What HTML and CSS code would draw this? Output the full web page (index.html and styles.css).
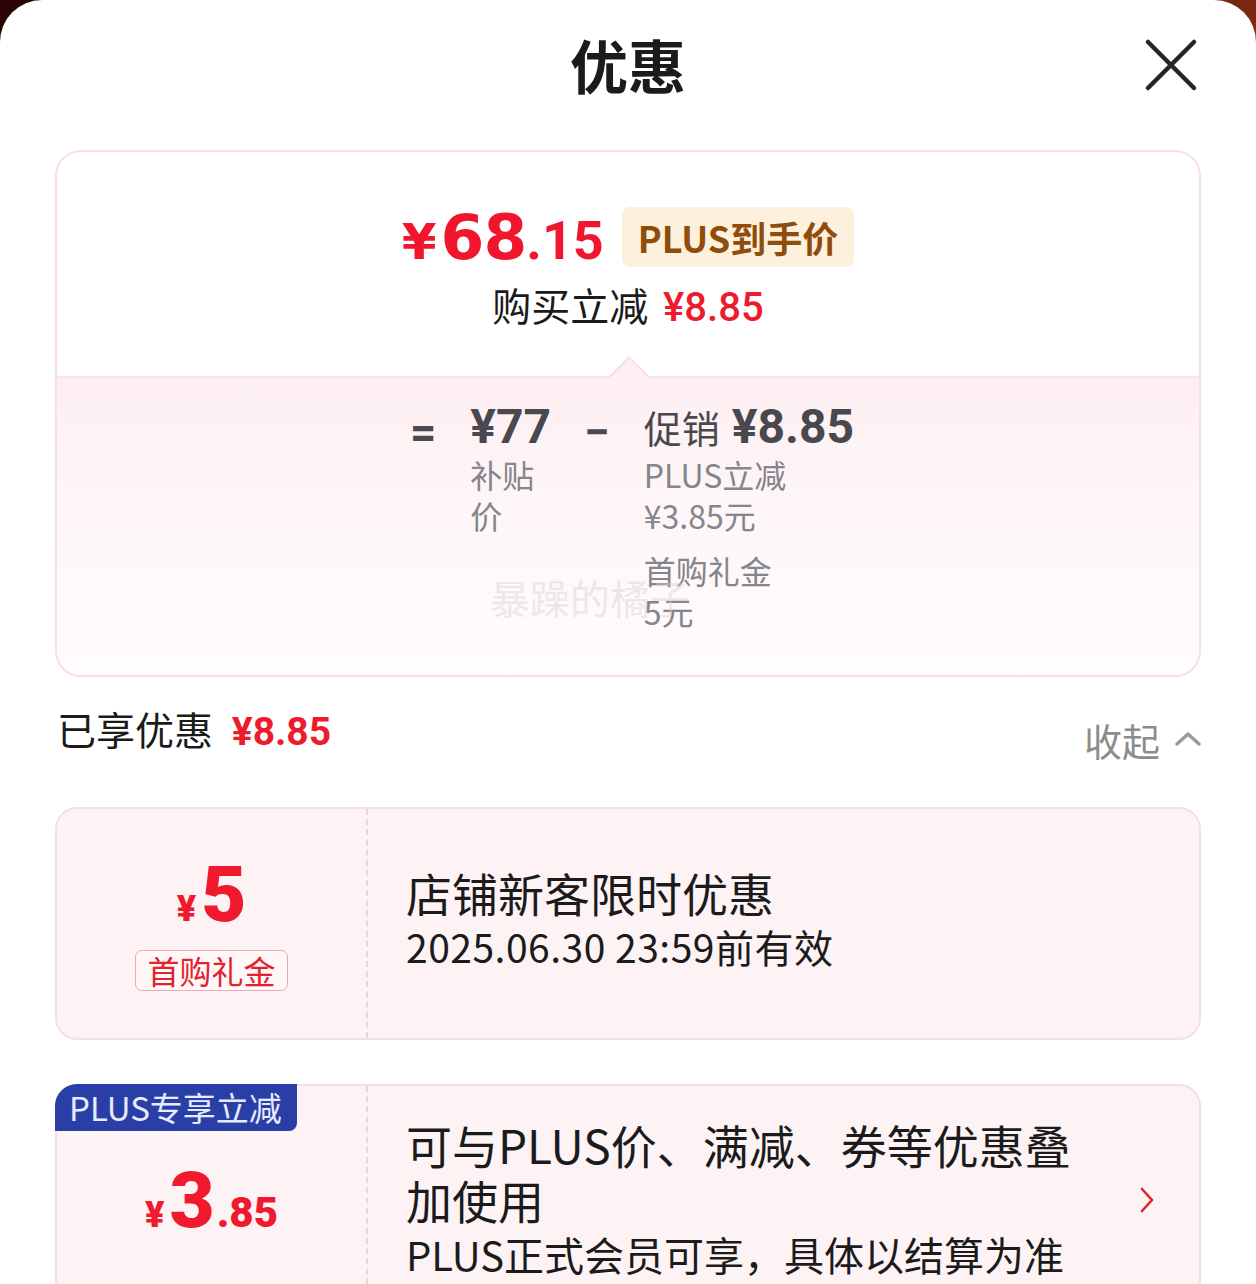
FILE: index.html
```html
<!DOCTYPE html>
<html lang="zh-CN">
<head>
<meta charset="utf-8">
<title>优惠</title>
<link rel="stylesheet" href="styles.css">
</head>
<body>
<div class="sheet">
  <header class="head">
    <h1 class="title">优惠</h1>
    <button class="close" aria-label="关闭">
      <svg width="54" height="54" viewBox="0 0 54 54"><path d="M4 4 L50 50 M50 4 L4 50" stroke="#262626" stroke-width="4.5" stroke-linecap="round" fill="none"/></svg>
    </button>
  </header>

  <section class="summary">
    <div class="summary-top">
      <div class="final">
        <span class="final-price"><span class="fp-yen">¥</span><span class="fp-int">68</span><span class="fp-dec">.15</span></span>
        <span class="plus-tag">PLUS到手价</span>
      </div>
      <div class="saved">购买立减 <span class="saved-amt">¥8.85</span></div>
    </div>
    <div class="summary-bottom">
      <div class="formula">
        <span class="op">=</span>
        <div class="term base">
          <div class="amt">¥77</div>
          <div class="lbl">补贴价</div>
        </div>
        <span class="op">−</span>
        <div class="term promo">
          <div class="amt"><span class="amt-name">促销</span> ¥8.85</div>
          <div class="lbl"><span class="lbl-line">PLUS立减</span> <span class="lbl-line">¥3.85元</span></div>
          <div class="lbl"><span class="lbl-line">首购礼金</span> <span class="lbl-line">5元</span></div>
        </div>
      </div>
      <span class="watermark">暴躁的橘子</span>
    </div>
  </section>

  <div class="enjoyed">
    <div class="enjoyed-text">已享优惠 <span class="enjoyed-amt">¥8.85</span></div>
    <div class="collapse">收起
      <svg width="28" height="16" viewBox="0 0 28 16"><path d="M3 13 L14 3 L25 13" stroke="#9a9a9a" stroke-width="3.5" stroke-linecap="round" stroke-linejoin="round" fill="none"/></svg>
    </div>
  </div>

  <div class="coupon coupon-gift">
    <div class="c-left">
      <div class="c-amt"><span class="c-yen">¥</span><span class="c-int">5</span></div>
      <span class="c-tag">首购礼金</span>
    </div>
    <div class="c-right">
      <div class="c-text">
        <div class="c-title">店铺新客限时优惠</div>
        <div class="c-sub">2025.06.30 23:59前有效</div>
      </div>
    </div>
  </div>

  <div class="coupon coupon-plus">
    <span class="c-badge">PLUS专享立减</span>
    <div class="c-left">
      <div class="c-amt"><span class="c-yen">¥</span><span class="c-int">3</span><span class="c-dec">.85</span></div>
    </div>
    <div class="c-right">
      <div class="c-text">
        <div class="c-title">可与PLUS价、满减、券等优惠叠加使用</div>
        <div class="c-sub c-sub-lg">PLUS正式会员可享，具体以结算为准</div>
      </div>
      <svg class="c-chev" width="16" height="28" viewBox="0 0 16 28"><path d="M3 3 L13 14 L3 25" stroke="#e3222f" stroke-width="2.6" stroke-linecap="round" stroke-linejoin="round" fill="none"/></svg>
    </div>
  </div>
</div>
</body>
</html>
```

FILE: styles.css
```css
* { box-sizing: border-box; }

body {
  margin: 0;
  background: linear-gradient(90deg, #2a0406 0%, #4a0c08 50%, #7a2a10 100%);
  font-family: "Noto Sans CJK SC", "Noto Sans", sans-serif;
  color: #1b1b1b;
}

.sheet {
  background: #fff;
  border-radius: 42px 42px 0 0;
  min-height: 1284px;
  overflow: hidden;
}

.head {
  height: 134px;
  padding-bottom: 6px;
  display: flex;
  align-items: center;
  justify-content: center;
  position: relative;
}

.title {
  margin: 0;
  font-size: 58px;
  font-weight: 700;
  line-height: 1;
  color: #1b1b1b;
}

.close {
  position: absolute;
  left: 1144px;
  top: 38px;
  width: 54px;
  height: 54px;
  padding: 0;
  border: 0;
  background: none;
}
.close svg { display: block; }

/* summary card */
.summary {
  margin: 16px 55px 0 55px;
  border: 2px solid #f8dfe5;
  border-radius: 26px;
  overflow: hidden;
}

.summary-top {
  height: 226px;
  padding-top: 52px;
  display: flex;
  flex-direction: column;
  align-items: center;
  position: relative;
  border-bottom: 2px solid #fbe4e9;
}

.summary-top::after {
  content: "";
  position: absolute;
  left: 50%;
  bottom: -14px;
  width: 26px;
  height: 26px;
  margin-left: -13px;
  background: #fdeff2;
  border-top: 2px solid #fbdde4;
  border-left: 2px solid #fbdde4;
  transform: rotate(45deg);
  z-index: 1;
}

.final {
  display: flex;
  align-items: center;
  gap: 18px;
  height: 66px;
}

.final-price {
  color: #f0162e;
  display: flex;
  align-items: baseline;
}

.fp-yen {
  font-family: "DejaVu Sans", sans-serif;
  font-weight: 700;
  font-size: 50px;
  margin-right: 4px;
}

.fp-int {
  font-family: "DejaVu Sans", sans-serif;
  font-weight: 700;
  font-size: 63px;
  letter-spacing: -1px;
}

.fp-dec {
  font-family: "Roboto", sans-serif;
  font-weight: 700;
  font-size: 54px;
}

.plus-tag {
  background: #fdf0dc;
  color: #8f4c0b;
  font-weight: 700;
  font-size: 36px;
  height: 60px;
  line-height: 60px;
  padding: 0 16px;
  border-radius: 8px;
}

.saved {
  margin-top: 12px;
  font-size: 39px;
  line-height: 44px;
  color: #1b1b1b;
}

.saved-amt {
  font-family: "Roboto", sans-serif;
  font-weight: 500;
  font-size: 40px;
  color: #ec1b2e;
  margin-left: 6px;
}

.summary-bottom {
  position: relative;
  display: flex;
  justify-content: center;
  padding: 22px 0 43px;
  background: linear-gradient(180deg, #fdeff2 0%, #fef6f8 45%, #fffcfc 100%);
}

.formula {
  display: flex;
  align-items: flex-start;
  gap: 34px;
  margin-left: 8px;
}

.op {
  font-family: "Roboto", sans-serif;
  font-weight: 700;
  font-size: 46px;
  line-height: 64px;
  color: #4a4a50;
}

.amt {
  font-family: "Roboto", sans-serif;
  font-weight: 700;
  font-size: 48px;
  line-height: 54px;
  color: #48484e;
  white-space: nowrap;
}

.amt-name {
  font-family: "Noto Sans CJK SC", sans-serif;
  font-weight: 400;
  font-size: 38px;
}

.base { width: 80px; }

.lbl {
  font-size: 32px;
  line-height: 41px;
  color: #85858c;
}

.lbl-line { display: block; }
.promo .lbl + .lbl { margin-top: 14px; }

.watermark {
  position: absolute;
  left: 433px;
  top: 190px;
  font-size: 40px;
  color: rgba(215, 208, 210, 0.45);
  white-space: nowrap;
}

/* enjoyed row */
.enjoyed {
  margin: 24px 54px 0 57px;
  display: flex;
  justify-content: space-between;
  align-items: center;
  height: 58px;
}

.enjoyed-text {
  font-size: 39px;
  line-height: 58px;
  color: #1b1b1b;
}

.enjoyed-amt {
  font-family: "Roboto", sans-serif;
  font-weight: 700;
  font-size: 39px;
  color: #ec1b2e;
  margin-left: 10px;
}

.collapse {
  display: flex;
  align-items: center;
  gap: 14px;
  font-size: 38px;
  color: #8c8c8c;
  margin-top: 18px;
}

/* coupons */
.coupon {
  position: relative;
  margin: 48px 55px 0 55px;
  display: grid;
  grid-template-columns: 309px 1fr;
  background: #fdf3f5;
  border: 2px solid #f6dfe3;
  border-radius: 22px;
  min-height: 233px;
}

.coupon-plus { margin-top: 44px; }

.c-left {
  display: flex;
  flex-direction: column;
  align-items: center;
  justify-content: center;
}

.c-amt {
  display: flex;
  align-items: baseline;
  color: #ef1a2d;
  font-family: "Roboto", sans-serif;
  font-weight: 900;
  line-height: 1;
}

.c-yen { font-size: 36px; margin-right: 5px; }
.c-int { font-size: 78px; }
.c-dec { font-size: 42px; margin-left: 2px; }

.c-tag {
  margin-top: 16px;
  border: 1px solid #eda9b1;
  border-radius: 7px;
  background: #fff7f8;
  color: #e3222f;
  font-size: 32px;
  line-height: 39px;
  padding: 0 11px;
}

.c-right {
  border-left: 2px dashed #ecd5da;
  padding: 0 44px 0 38px;
  display: flex;
  align-items: center;
  gap: 16px;
}

.coupon-gift .c-right { padding-bottom: 12px; }

.c-text { flex: 1; }

.c-title {
  font-size: 46px;
  line-height: 56px;
  color: #1b1b1b;
}

.c-sub {
  font-size: 39px;
  line-height: 52px;
  color: #1b1b1b;
  letter-spacing: 0.5px;
}

.coupon-plus .c-right { padding-top: 28px; padding-bottom: 30px; }
.coupon-plus .c-text { max-width: 680px; }
.coupon-plus .c-title { line-height: 55px; }
.c-sub-lg { font-size: 40px; line-height: 55px; white-space: nowrap; letter-spacing: 0; }

.c-chev { flex: none; display: block; margin-left: auto; }

.c-badge {
  position: absolute;
  left: -2px;
  top: -2px;
  height: 47px;
  line-height: 47px;
  padding: 0 15px 0 14px;
  background: #2a3fa6;
  color: #e6ebff;
  font-size: 33px;
  border-radius: 22px 0 8px 0;
  white-space: nowrap;
}
```
